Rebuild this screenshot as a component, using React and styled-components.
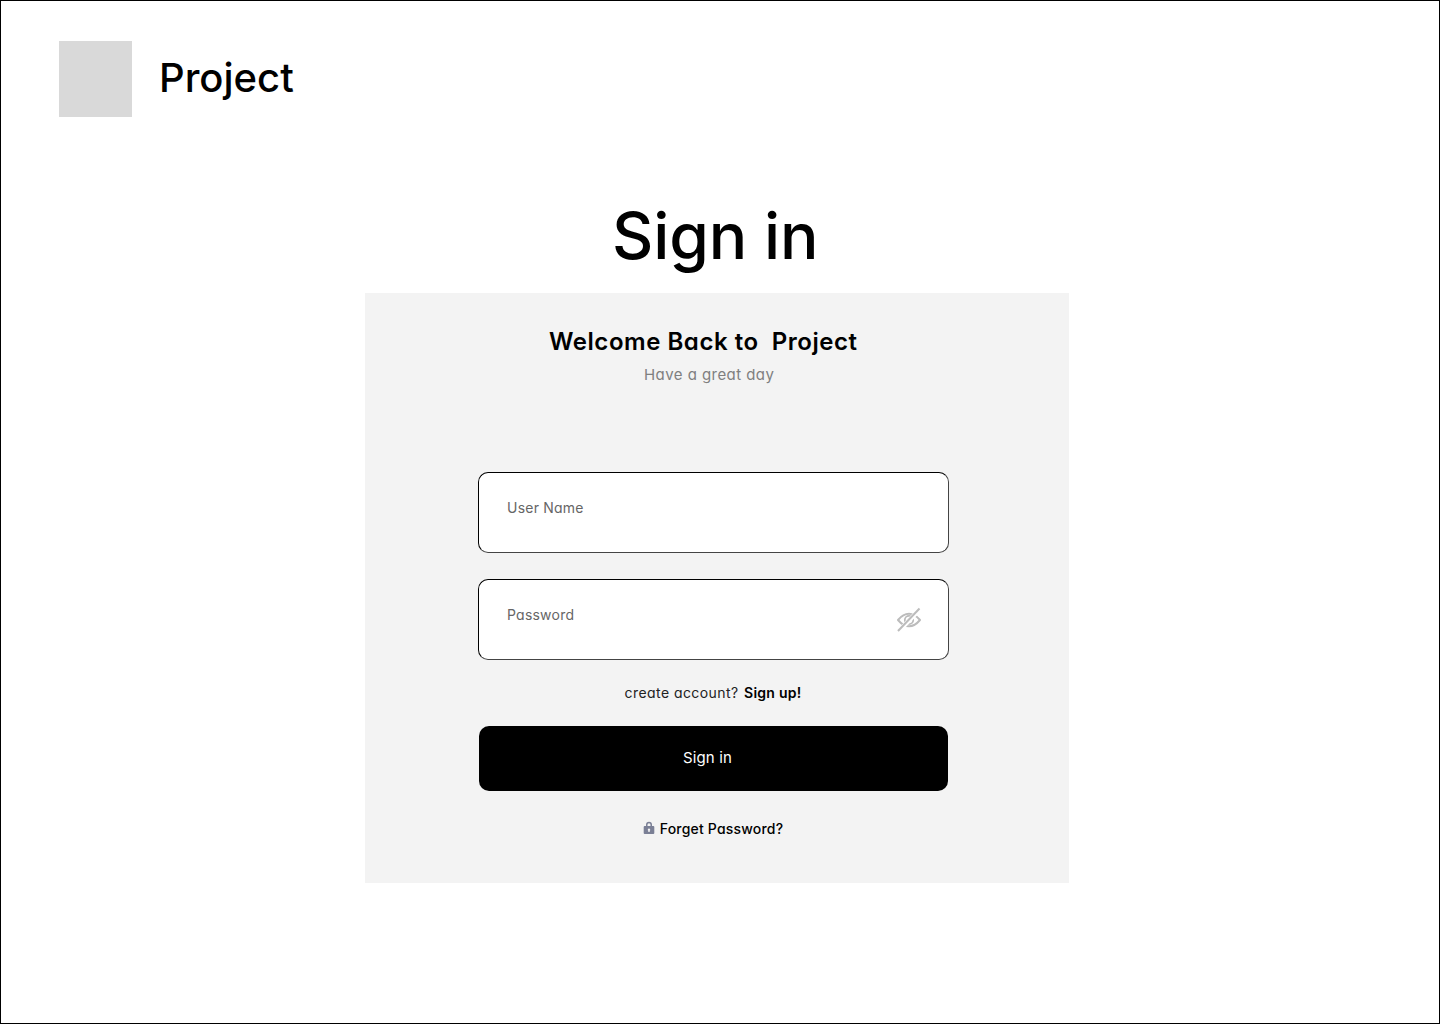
import React from "react";
import styled, { createGlobalStyle } from "styled-components";

const Global = createGlobalStyle`
  html, body { margin: 0; padding: 0; background: #fff; }
  #root { width: 1440px; height: 1024px; }
  * { box-sizing: border-box; }
`;

const Frame = styled.div`
  width: 1440px;
  height: 1024px;
  border: 1px solid #000;
  background: #fff;
  display: flex;
  flex-direction: column;
  align-items: flex-start;
  padding: 40px 0 0 58px;
  font-family: Inter, "Liberation Sans", sans-serif;
  color: #000;
`;

const Header = styled.header`
  display: flex;
  align-items: center;
  gap: 27px;
  height: 76px;
`;

const Logo = styled.div`
  width: 73px;
  height: 76px;
  background: #d9d9d9;
`;

const Brand = styled.div`
  font-size: 40px;
  line-height: 46px;
  font-weight: 500;
  padding-bottom: 2px;
`;

const Title = styled.h1`
  margin: 80px 0 19px 553px;
  font-size: 64px;
  line-height: 77px;
  font-weight: 500;
  letter-spacing: -0.15px;
  white-space: nowrap;
`;

const Card = styled.main`
  margin: 0 0 0 306px;
  width: 704px;
  height: 590px;
  background: #f3f3f3;
  display: flex;
  flex-direction: column;
  font-family: Inter, "Noto Sans", sans-serif;
  font-feature-settings: "cv11" 1;
`;

const Welcome = styled.h2`
  margin: 33px 0 0;
  padding-left: 184px;
  font-size: 24px;
  line-height: 32px;
  font-weight: 600;
  white-space: pre;
  letter-spacing: 0.54px;
`;

const Tagline = styled.p`
  margin: 7px 0 0;
  padding-left: 279px;
  font-size: 15px;
  line-height: 20px;
  color: #7f7f7f;
  letter-spacing: 0.44px;
`;

const Form = styled.form`
  margin: 87px 0 0 113px;
  width: 471px;
  display: flex;
  flex-direction: column;
`;

const Field = styled.div`
  position: relative;
  height: 81px;
  background: #fff;
  border: 1px solid #000;
  border-right-color: #444;
  border-bottom-color: #444;
  border-radius: 10px;
  padding: 25px 28px 0;
  margin-bottom: ${(p) => p.$gap}px;
  font-size: 14px;
  line-height: 20px;
  color: #666;
  letter-spacing: 0.22px;
`;

const EyeButton = styled.span`
  position: absolute;
  right: 26px;
  top: 27px;
  display: flex;
`;

const Prompt = styled.p`
  margin: 0;
  padding-right: 1px;
  text-align: center;
  font-size: 14px;
  line-height: 20px;
  color: #222;
  white-space: pre;
  letter-spacing: 0.44px;
`;

const Strong = styled.strong`
  margin-left: 1px;
  font-weight: 600;
  color: #000;
  letter-spacing: 0.25px;
`;

const Submit = styled.button`
  margin: 23px 0 0 1px;
  width: 469px;
  height: 65px;
  background: #000;
  color: #fff;
  border: 0;
  border-radius: 10px;
  padding: 0 12px 2px 0;
  font: 400 15px/20px Inter, "Noto Sans", sans-serif;
  font-feature-settings: "cv11" 1;
  letter-spacing: 0.15px;
`;

const Forgot = styled.div`
  margin-top: 28px;
  padding-right: 1px;
  display: flex;
  justify-content: center;
  align-items: center;
  gap: 5px;
  font-size: 14px;
  line-height: 20px;
  font-weight: 500;
  letter-spacing: 0.2px;
`;

const LockIcon = styled.svg`
  margin-top: -2px;
`;

export default function App() {
  return (
    <Frame>
      <Global />
      <Header>
        <Logo />
        <Brand>Project</Brand>
      </Header>
      <Title>Sign in</Title>
      <Card>
        <Welcome>{"Welcome Back to  Project"}</Welcome>
        <Tagline>Have a great day</Tagline>
        <Form>
          <Field $gap={26}>User Name</Field>
          <Field $gap={23}>
            Password
            <EyeButton>
              <svg width="26" height="26" viewBox="0 0 26 26" fill="none" stroke="#bcbcbc" strokeWidth="2" strokeLinejoin="round">
                <path d="M2 13C5.500 8.800 9 6.800 13 6.800S20.500 8.800 24 13c-3.500 4.200-7 6.200-11 6.200S5.500 17.200 2 13z" />
                <path d="M8.800 13a4.200 4.200 0 0 1 8.400 0 4.200 4.200 0 0 1-8.400 0z" strokeWidth="1.800" />
                <path d="M24.500 1.500 2.500 24.500" stroke="#fff" strokeWidth="4.500" />
                <path d="M23.500 1.500 2 24" strokeWidth="2" />
              </svg>
            </EyeButton>
          </Field>
          <Prompt>
            {"create account? "}
            <Strong>Sign up!</Strong>
          </Prompt>
          <Submit type="button">Sign in</Submit>
          <Forgot>
            <LockIcon width="12" height="14" viewBox="0 0 12 14">
              <path fill="#7a7f95" fillRule="evenodd" d="M3 5V3.800a3 3 0 0 1 6 0V5h1.300a1 1 0 0 1 1 1v6a1 1 0 0 1-1 1H1.700a1 1 0 0 1-1-1V6a1 1 0 0 1 1-1H3zm1.500 0h3V3.800a1.500 1.500 0 0 0-3 0V5zM6 7.600a1.200 1.200 0 0 0-.7 2.200v1.200h1.400V9.800A1.200 1.200 0 0 0 6 7.600z" />
            </LockIcon>
            <span>Forget Password?</span>
          </Forgot>
        </Form>
      </Card>
    </Frame>
  );
}
